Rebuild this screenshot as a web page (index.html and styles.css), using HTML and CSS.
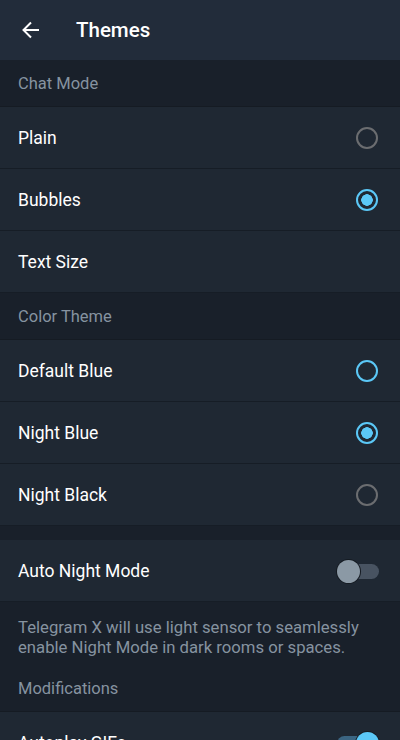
FILE: index.html
```html
<!DOCTYPE html>
<html lang="en">

<head>
    <meta charset="UTF-8">
    <meta name="viewport" content="width=device-width, initial-scale=1.0">
    <title>Themes</title>
    <link rel="stylesheet" href="styles.css">
</head>

<body>
    <header class="topbar">
        <button class="back" type="button">
            <svg width="24" height="24" viewBox="0 0 24 24">
                <path d="M20 12H5M12 4.5 4.5 12 12 19.5" fill="none" stroke="#fff" stroke-width="2" />
            </svg>
        </button>
        <h1 class="title">Themes</h1>
    </header>

    <div class="section">Chat Mode</div>
    <div class="row">
        <span>Plain</span>
        <span class="radio"></span>
    </div>
    <div class="row">
        <span>Bubbles</span>
        <span class="radio checked"></span>
    </div>
    <div class="row">
        <span>Text Size</span>
    </div>

    <div class="section">Color Theme</div>
    <div class="row">
        <span>Default Blue</span>
        <span class="radio active"></span>
    </div>
    <div class="row">
        <span>Night Blue</span>
        <span class="radio checked"></span>
    </div>
    <div class="row">
        <span>Night Black</span>
        <span class="radio"></span>
    </div>

    <div class="spacer"></div>
    <div class="row">
        <span>Auto Night Mode</span>
        <span class="toggle"></span>
    </div>
    <p class="hint">Telegram X will use light sensor to seamlessly enable Night Mode in dark rooms or spaces.</p>

    <div class="section">Modifications</div>
    <div class="row">
        <span>Autoplay GIFs</span>
        <span class="toggle on"></span>
    </div>
</body>

</html>
```

FILE: styles.css
```css
body {
    margin: 0;
    font-family: Roboto, "Noto Sans", sans-serif;
    background-color: #19202a;
    color: #fff;
    overflow: hidden;
}

.topbar {
    height: 60px;
    background-color: #222c3a;
    display: flex;
    align-items: center;
}

.back {
    background: none;
    border: 0;
    padding: 0;
    margin-left: 19px;
    width: 24px;
    height: 24px;
    display: flex;
}

.title {
    margin: 0 0 0 33px;
    font-size: 20.5px;
    font-weight: 500;
}

.section {
    height: 46px;
    border-bottom: 1px solid #151b23;
    padding-left: 18px;
    display: flex;
    align-items: center;
    font-size: 16.5px;
    color: #8693a0;
}

.row {
    height: 60px;
    padding: 1px 22px 0 18px;
    border-bottom: 1px solid #161d26;
    background-color: #1f2833;
    display: flex;
    align-items: center;
    justify-content: space-between;
    font-size: 17.5px;
}

.radio {
    width: 18px;
    height: 18px;
    border: 2px solid #6b6d70;
    border-radius: 50%;
    box-sizing: content-box;
    margin-bottom: 1px;
}

.radio.active {
    border-color: #5bc8f7;
}

.radio.checked {
    border-color: #5bc8f7;
    background: radial-gradient(circle, #5bc8f7 0 5.5px, transparent 6px);
}

.spacer {
    height: 14px;
}

.toggle {
    position: relative;
    width: 42px;
    height: 15px;
    border-radius: 8px;
    background-color: #485361;
    margin-right: -1px;
}

.toggle::after {
    content: "";
    position: absolute;
    left: 0;
    top: -4px;
    width: 23px;
    height: 23px;
    border-radius: 50%;
    background-color: #8b99a5;
    box-shadow: 0 0 0 1px #151b22;
}

.toggle.on {
    background-color: #3b6582;
}

.toggle.on::after {
    left: auto;
    right: 0;
    background-color: #5bc8f7;
}

.hint {
    margin: 0;
    padding: 16px 30px 7px 18px;
    font-size: 16.7px;
    line-height: 20px;
    color: #8693a0;
}
```
